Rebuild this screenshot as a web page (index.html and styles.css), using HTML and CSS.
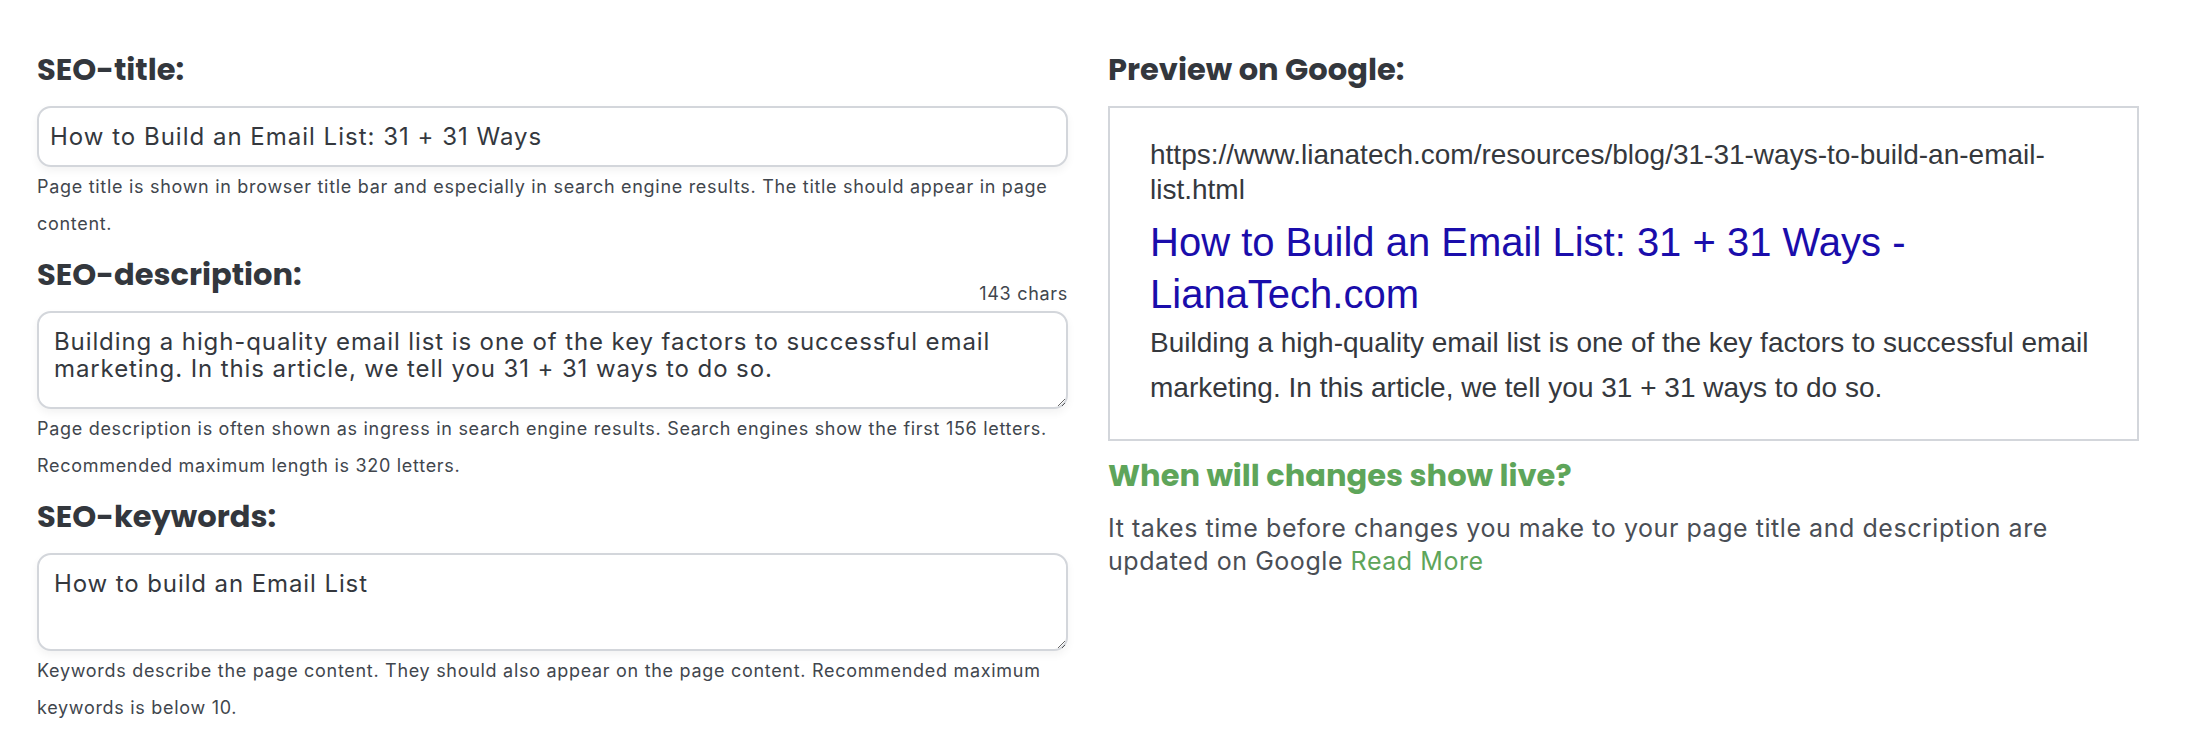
FILE: index.html
```html
<!DOCTYPE html>
<html lang="en">
<head>
    <meta charset="UTF-8">
    <meta name="viewport" content="width=device-width, initial-scale=1.0">
    <title>SEO settings</title>
    <link rel="stylesheet" href="styles.css">
</head>
<body>

    <div class="seo-grid">

        <!-- Left column: SEO fields -->
        <div class="seo-fields">
            <label class="field-label" for="seoTitle">SEO-title:</label>
            <input type="text" id="seoTitle" class="field-input" value="How to Build an Email List: 31 + 31 Ways">
            <p class="field-help">Page title is shown in browser title bar and especially in search engine results. The title should appear in page content.</p>

            <div class="field-head">
                <label class="field-label" for="seoDescription">SEO-description:</label>
                <span class="char-count">143 chars</span>
            </div>
            <textarea id="seoDescription" class="field-textarea">Building a high-quality email list is one of the key factors to successful email marketing. In this article, we tell you 31 + 31 ways to do so.</textarea>
            <p class="field-help">Page description is often shown as ingress in search engine results. Search engines show the first 156 letters. Recommended maximum length is 320 letters.</p>

            <label class="field-label" for="seoKeywords">SEO-keywords:</label>
            <textarea id="seoKeywords" class="field-textarea">How to build an Email List</textarea>
            <p class="field-help">Keywords describe the page content. They should also appear on the page content. Recommended maximum keywords is below 10.</p>
        </div>

        <!-- Right column: Google preview -->
        <div class="seo-preview">
            <h2 class="field-label">Preview on Google:</h2>
            <div class="google-box">
                <div class="google-url">https://www.lianatech.com/resources/blog/31-31-ways-to-build-an-email-list.html</div>
                <div class="google-title">How to Build an Email List: 31 + 31 Ways - LianaTech.com</div>
                <div class="google-desc">Building a high-quality email list is one of the key factors to successful email marketing. In this article, we tell you 31 + 31 ways to do so.</div>
            </div>

            <h3 class="live-title">When will changes show live?</h3>
            <p class="live-text">It takes time before changes you make to your page title and description are updated on Google <a href="#" class="read-more">Read More</a></p>
        </div>

    </div>

</body>
</html>
```

FILE: styles.css
```css
body {
    margin: 0;
    background-color: #fff;
    font-family: Inter, "Liberation Sans", sans-serif;
    color: #3d4148;
}

.seo-grid {
    display: grid;
    grid-template-columns: 1031px 1031px;
    column-gap: 40px;
    padding: 52px 0 0 37px;
}

.field-label {
    display: block;
    margin: 0 0 18px 0;
    font-family: Poppins, "Open Sans", sans-serif;
    font-weight: 700;
    font-size: 30.5px;
    line-height: 36px;
    color: #33373d;
}

.field-head {
    display: flex;
    justify-content: space-between;
    align-items: flex-end;
    margin-top: 15px;
}

.field-head .field-label {
    margin-bottom: 12px;
}

.char-count {
    font-size: 18px;
    line-height: 22px;
    letter-spacing: 0.7px;
    color: #41464d;
}

.field-input,
.field-textarea {
    display: block;
    width: 100%;
    box-sizing: border-box;
    border: 2px solid #d3d6db;
    border-radius: 14px;
    background-color: #fff;
    box-shadow: 0 4px 8px rgba(0, 0, 0, 0.05);
    font-family: Inter, "Liberation Sans", sans-serif;
    font-size: 24px;
    letter-spacing: 0.9px;
    color: #34383e;
    outline: none;
}

.field-input {
    height: 61px;
    padding: 0 11px;
    letter-spacing: 1px;
}

.field-head + .field-textarea {
    margin-top: 6px;
}

.field-textarea {
    height: 98px;
    padding: 15px 15px;
    line-height: 27px;
    resize: vertical;
}

.field-help {
    margin: 2px 0 0 0;
    font-size: 18px;
    line-height: 36.5px;
    letter-spacing: 0.7px;
    color: #41464d;
}

.field-help + .field-label {
    margin-top: 15px;
}

.google-box {
    border: 2px solid #d3d6db;
    padding: 29px 40px 29px 40px;
    font-family: "Liberation Sans", Arial, sans-serif;
}

.google-url {
    font-size: 28px;
    line-height: 35px;
    color: #35383d;
}

.google-title {
    margin-top: 9px;
    font-size: 40px;
    line-height: 52px;
    color: #1a0dab;
}

.google-desc {
    font-size: 28px;
    line-height: 45px;
    color: #35383d;
}

.live-title {
    margin: 17px 0 0 0;
    font-family: Poppins, "Open Sans", sans-serif;
    font-weight: 700;
    font-size: 30.5px;
    line-height: 36px;
    color: #5ea55a;
}

.live-text {
    margin: 18px 0 0 0;
    font-size: 25px;
    line-height: 33px;
    letter-spacing: 0.55px;
    color: #4a4e55;
}

.read-more {
    color: #5ea55a;
    text-decoration: none;
}
```
